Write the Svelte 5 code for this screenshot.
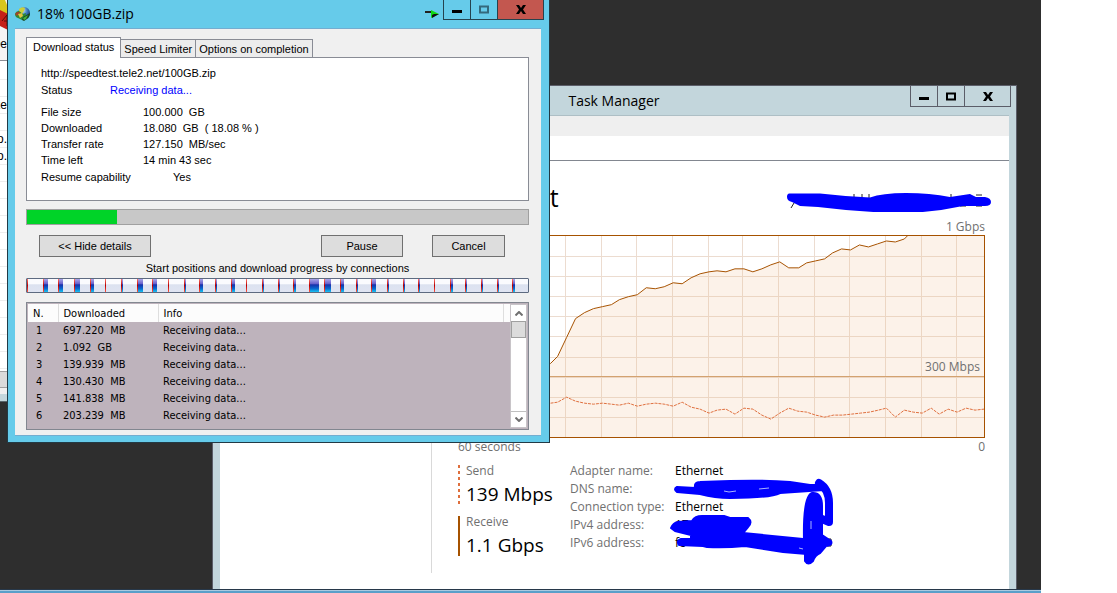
<script>
    let activeTab = $state('Download status');
    let showDetails = $state(true);
    let paused = $state(false);

    const tabs = ['Download status', 'Speed Limiter', 'Options on completion'];

    const info = [
        { label: 'File size', value: '100.000  GB' },
        { label: 'Downloaded', value: '18.080  GB  ( 18.08 % )' },
        { label: 'Transfer rate', value: '127.150  MB/sec' },
        { label: 'Time left', value: '14 min 43 sec' },
    ];

    // Downloaded part of each connection, in pixels
    const connections = [0, 4, 4, 5, 3, 0, 1, 5, 4, 0, 1, 3, 1, 3, 0, 1, 1, 2, 9, 6, 3, 1, 4, 1, 1, 1, 0, 2, 1, 1, 1, 2];

    const parts = [
        { n: '1', size: '697.220  MB' },
        { n: '2', size: '1.092  GB' },
        { n: '3', size: '139.939  MB' },
        { n: '4', size: '130.430  MB' },
        { n: '5', size: '141.838  MB' },
        { n: '6', size: '203.239  MB' },
        { n: '', size: '' },
    ];

    const files = ['', '', 'xe', '', 'o.', 'o.', '', '', '', '', '', '', '', '', '', '', '', ''];

    // Graph grid, in viewBox units
    const gridX = [36, 72, 107, 143, 178, 214, 250, 285, 321, 357, 392, 428, 464, 499];
    const gridY = [21, 41, 61, 81, 101, 122, 142, 162, 182];

    const receive =
        '0,150 60,140 92,128 99,121 108,102 117,83 126,77 135,73 144,71 153,69 161,64 170,61 179,59 188,52 197,53 206,51 215,47 224,48 233,42 242,38 251,36 259,35 268,36 277,33 286,33 295,36 304,33 313,29 322,26 331,32 341,32 349,27 358,25 367,23 375,17 384,13 393,14 402,9 411,11 420,8 429,5 438,6 447,3 450,0';
    const send =
        '0,172 60,170 92,168 99,167 108,162 117,166 126,168 135,169 144,168 153,169 161,170 170,168 179,171 188,169 197,168 206,169 215,171 224,167 233,172 242,174 251,178 259,175 268,174 277,179 286,173 295,174 304,180 313,184 322,178 331,173 340,176 349,177 358,180 367,182 376,180 385,180 394,179 403,178 412,177 421,175 429,173 438,182 447,175 456,177 465,178 474,173 482,179 491,174 500,177 509,173 518,175 527,174';
</script>

<div class="desktop">
    <!-- File list behind the download window -->
    <div class="explorer">
        <svg class="archive" viewBox="0 0 8 31" aria-hidden="true">
            <path d="M0 0h5l3 7v8H0z" fill="#d8c61c" />
            <path d="M0 10l8 4v16l-8-4z" fill="#c52018" />
            <path d="M2 21l5-6v11M4 21h4" stroke="#5b0d08" stroke-width="1" fill="none" />
        </svg>
        <div class="explorer-label">De</div>
        <div class="files">
            {#each files as file}
                <div class="file">{file}</div>
            {/each}
        </div>
        <div class="explorer-scroll"></div>
        <div class="explorer-status"></div>
    </div>

    <!-- Task Manager -->
    <section class="window task-manager">
        <header class="tm-title">
            <h1>Task Manager</h1>
            <div class="caption-buttons tm-buttons">
                <button aria-label="Minimize"><svg viewBox="0 0 10 9"><path d="M0 5h10v3H0z" /></svg></button>
                <button aria-label="Maximize"><svg viewBox="0 0 10 9"><path d="M1 1.500h8v6H1z" fill="none" stroke="#000" stroke-width="2" /></svg></button>
                <button class="close" aria-label="Close"><svg viewBox="0 0 10 9"><path d="M0 0h3l2 3 2-3h3L7 4.500l3 4.500H7L5 6 3 9H0l3-4.500z" /></svg></button>
            </div>
        </header>
        <div class="tm-client">
            <div class="tm-menu"></div>
            <div class="tm-tabs"></div>
            <div class="tm-body">
                <div class="tm-sidebar"></div>
                <main class="tm-main">
                    <div class="tm-heading">
                        <h2>Ethernet</h2>
                        <svg class="adapter-mark" viewBox="0 0 206 22" role="img" aria-label="Adapter hidden">
                            <path d="M8 13l-3 5M68 4v4M76 4v4M83 4v4M165 4v4M174 16h6M190 5h6M190 16h6" stroke="#222" stroke-width="1" />
                            <path d="M4 3.500h30q26 3 50 4Q96 3 120 3t44 4l20-3 6 3h9q6 1 6 5t-6 4h-22q-32 7-65 7-40-1-80-6l-18-1q-4-2-8-4Q1 11 1 7t3-3.500z" fill="#00f" />
                        </svg>
                    </div>
                    <div class="scale top">1 Gbps</div>
                    <div class="graph">
                        <svg viewBox="0 0 527 202" preserveAspectRatio="none" role="img" aria-label="Throughput">
                            {#each gridX as x}
                                <path d="M{x} 0V202" class="grid" />
                            {/each}
                            {#each gridY as y}
                                <path d="M0 {y}H527" class="grid" />
                            {/each}
                            <polygon points="{receive} 527,0 527,202 0,202" class="area" />
                            <path d="M0 141H527" class="mark" />
                            <polyline points={receive} class="receive-line" />
                            <polyline points={send} class="send-line" />
                        </svg>
                        <span class="mark-label">300 Mbps</span>
                    </div>
                    <div class="scale bottom"><span>60 seconds</span><span>0</span></div>
                    <div class="stats">
                        <div class="rates">
                            <div class="rate send">
                                <div class="rate-label">Send</div>
                                <div class="rate-value">139 Mbps</div>
                            </div>
                            <div class="rate">
                                <div class="rate-label">Receive</div>
                                <div class="rate-value">1.1 Gbps</div>
                            </div>
                        </div>
                        <dl class="adapter">
                            <dt>Adapter name:</dt><dd>Ethernet</dd>
                            <dt>DNS name:</dt><dd></dd>
                            <dt>Connection type:</dt><dd>Ethernet</dd>
                            <dt>IPv4 address:</dt><dd>17</dd>
                            <dt>IPv6 address:</dt><dd>fe</dd>
                        </dl>
                        <svg class="scribble" viewBox="668 476 170 92" aria-hidden="true">
                            <path d="M827 540h4v7h-4" stroke="#111" fill="none" />
                            <g fill="#00f" stroke="#00f" stroke-width="2" stroke-linejoin="round">
                                <path d="M677 488l18 1q-1-6 5-6l30-1q35-1 60 1l20 3h14v5l-44 3q-10 5-50 5-15 0-30-4l-23-2q-4-3 0-5z" />
                                <path d="M671 529q2-5 7-6l14-1q3-5 10-5l22 0 6 2h18q5 4 0 9l-5 6 60 6h4v15l-24-2-38-6q-20 2-38 1l-4-1-24-1q-3-4 2-6l10 0v-4l-16-4z" />
                                <path d="M804 541q-1-44 8-47 10-1 10 13v29l9 6q2 4-5 5l-6 7q-5 2-7 8-5 5-8 0v-12z" />
                            </g>
                            <path d="M819 484q10 6 10 20v19l-7-3" fill="none" stroke="#00f" stroke-width="8" stroke-linecap="round" stroke-linejoin="round" />
                            <path d="M724 492l5 1 7-1M759 490l10-1M811 522v8M799 549l4 1" stroke="#aab4ff" fill="none" />
                        </svg>
                    </div>
                </main>
            </div>
        </div>
    </section>

    <!-- Download window -->
    <section class="window download">
        <header class="dl-title">
            <svg class="app-icon" viewBox="0 0 16 16" aria-hidden="true">
                <defs>
                    <radialGradient id="globe" cx="0.4" cy="0.3" r="0.7">
                        <stop offset="0" stop-color="#cfe3f5" />
                        <stop offset="0.5" stop-color="#3f7fc4" />
                        <stop offset="1" stop-color="#12336e" />
                    </radialGradient>
                </defs>
                <circle cx="9" cy="7" r="6" fill="url(#globe)" />
                <path d="M4 3q3-3 6-1l-1 3-2 3-3 0z" fill="#c9cf3a" />
                <path d="M0 8q1-3 4-3l4 3 3-1-1 5-3 2-4-2q-3-1-3-4z" fill="#2b8a35" />
                <path d="M0 8q2-3 5-2l-1 2-2 2z" fill="#a0452a" />
                <path d="M3 8l4-1 1 3-3 2z" fill="#e3c43e" />
                <path d="M7 14l1-3 7-4q0 4-3 6l-3 2z" fill="#174a22" />
                <path d="M8 12l5-3-2 4-2 1z" fill="#46b038" />
            </svg>
            <h1>18% 100GB.zip</h1>
            <svg class="pin" viewBox="0 0 14 9" aria-hidden="true">
                <path d="M0 1h7v2H0z" fill="#222" />
                <path d="M6 0l8 4-8 4z" fill="#12d812" />
                <path d="M7 8V5l2-1h5z" fill="#111" />
            </svg>
            <div class="caption-buttons dl-buttons">
                <button aria-label="Minimize"><svg viewBox="0 0 10 9"><path d="M0 5h10v3H0z" /></svg></button>
                <button aria-label="Maximize" disabled><svg viewBox="0 0 10 9"><path d="M1 1.500h8v6H1z" fill="none" stroke="#34697c" stroke-width="2" /></svg></button>
                <button class="close" aria-label="Close"><svg viewBox="0 0 10 9"><path d="M0 0h3l2 3 2-3h3L7 4.500l3 4.500H7L5 6 3 9H0l3-4.500z" /></svg></button>
            </div>
        </header>
        <div class="dl-client">
            <div class="tabs" role="tablist">
                {#each tabs as tab}
                    <button role="tab" class="tab" class:active={activeTab === tab} aria-selected={activeTab === tab} onclick={() => (activeTab = tab)}>{tab}</button>
                {/each}
            </div>
            <div class="panel" role="tabpanel">
                {#if activeTab === 'Download status'}
                    <div class="url">http://speedtest.tele2.net/100GB.zip</div>
                    <dl class="info status">
                        <dt>Status</dt>
                        <dd>{paused ? 'Paused' : 'Receiving data...'}</dd>
                    </dl>
                    <dl class="info">
                        {#each info as row}
                            <dt>{row.label}</dt>
                            <dd>{row.value}</dd>
                        {/each}
                    </dl>
                    <dl class="info resume">
                        <dt>Resume capability</dt>
                        <dd>Yes</dd>
                    </dl>
                {/if}
            </div>
            <progress value="18" max="100" aria-label="Download progress"></progress>
            <div class="actions">
                <button class="push details" onclick={() => (showDetails = !showDetails)}>{showDetails ? '<< Hide details' : 'Show details >>'}</button>
                <button class="push pause" onclick={() => (paused = !paused)}>{paused ? 'Resume' : 'Pause'}</button>
                <button class="push cancel">Cancel</button>
            </div>
            {#if showDetails}
                <div class="connections-label">Start positions and download progress by connections</div>
                <div class="connections">
                    {#each connections as width}
                        <div class="connection"><i class="start"></i><i class="done" style="width: {width}px"></i></div>
                    {/each}
                </div>
                <div class="list">
                    <div class="list-view">
                        <table>
                            <thead>
                                <tr><th class="col-n">N.</th><th class="col-size">Downloaded</th><th>Info</th><th class="col-rest"></th></tr>
                            </thead>
                            <tbody>
                                {#each parts as part}
                                    <tr><td class="number">{part.n}</td><td>{part.size}</td><td>Receiving data...</td><td></td></tr>
                                {/each}
                            </tbody>
                        </table>
                    </div>
                    <div class="scrollbar">
                        <button aria-label="Scroll up"><svg viewBox="0 0 8 5"><path d="M0.500 4.500L4 1l3.500 3.500" /></svg></button>
                        <div class="thumb"></div>
                        <button class="down" aria-label="Scroll down"><svg viewBox="0 0 8 5"><path d="M0.500 0.500L4 4 7.500 0.500" /></svg></button>
                    </div>
                </div>
            {/if}
        </div>
    </section>

    <div class="taskbar"></div>
</div>

<style>
    :global(body) {
        background: #fff;
        overflow: hidden;
    }

    .desktop {
        position: relative;
        height: 100vh;
        margin-right: 76px;
        background: #2e2e2e;
        overflow: hidden;
        font-family: "Open Sans", "Noto Sans", sans-serif;
        font-size: 12px;
        color: #000;
    }

    .desktop * {
        box-sizing: border-box;
    }

    h1, h2, dl, dd {
        margin: 0;
        font-weight: normal;
    }

    button {
        padding: 0;
        border: 0;
        background: none;
        font: inherit;
        color: inherit;
    }

    .window {
        position: absolute;
        display: flex;
        flex-direction: column;
    }

    .caption-buttons {
        display: flex;
        align-self: flex-start;
    }

    .caption-buttons button {
        display: flex;
        align-items: center;
        justify-content: center;
        width: 27px;
        border-right: 1px solid;
        border-color: inherit;
    }

    .caption-buttons .close {
        width: 46px;
    }

    .caption-buttons svg {
        width: 10px;
        height: 9px;
    }

    /* Explorer strip */
    .explorer {
        position: absolute;
        left: 0;
        top: 0;
        width: 7px;
        background: #f4f4f4;
        overflow: hidden;
        font-family: "Liberation Sans", sans-serif;
    }

    .archive {
        display: block;
        width: 8px;
        height: 31px;
    }

    .explorer-label {
        display: flex;
        justify-content: flex-end;
        height: 30px;
        line-height: 26px;
        border-bottom: 1px solid #8b8d94;
    }

    .files {
        height: 310px;
        padding-top: 2px;
        overflow: hidden;
        background: #fff;
    }

    .file {
        display: flex;
        justify-content: flex-end;
        height: 17px;
        line-height: 17px;
        border-bottom: 1px solid #ededed;
    }

    .explorer-scroll {
        height: 17px;
        background: #dadada;
        border: solid #a0a0a0;
        border-width: 1px 0;
    }

    .explorer-status {
        height: 14px;
        background: #c3d6dc;
        border-top: 6px solid #efefef;
        border-bottom: 1px solid #59666c;
    }

    /* Task manager */
    .task-manager {
        left: 212px;
        right: 24px;
        top: 85px;
        bottom: 4px;
        padding: 0 7px;
        background: #c3d6dc;
        border: 1px solid #5b5d68;
        border-bottom: 0;
    }

    .tm-title {
        display: flex;
        height: 30px;
        border-bottom: 1px solid #aebfc5;
    }

    .tm-title h1 {
        flex: 1;
        padding-left: 98px;
        text-align: center;
        font-size: 14px;
        line-height: 29px;
    }

    .tm-buttons {
        height: 21px;
        margin-right: -2px;
        border: solid #5b5d68;
        border-width: 0 0 1px 1px;
    }

    .tm-client {
        flex: 1;
        display: flex;
        flex-direction: column;
        background: #fff;
    }

    .tm-menu {
        height: 20px;
        background: #efefef;
    }

    .tm-tabs {
        height: 25px;
        border-bottom: 1px solid #828790;
    }

    .tm-body {
        flex: 1;
        display: flex;
        padding-bottom: 16px;
    }

    .tm-sidebar {
        width: 212px;
        border-right: 1px solid #d9d9d9;
    }

    .tm-main {
        flex: 1;
        padding: 16px 24px 0 26px;
    }

    .tm-heading {
        display: flex;
        justify-content: space-between;
        height: 42px;
    }

    .tm-heading h2 {
        font-size: 25px;
        line-height: 40px;
    }

    .adapter-mark {
        width: 206px;
        height: 22px;
        margin: 13px -7px 0 0;
    }

    .scale {
        color: #707070;
        line-height: 16px;
    }

    .scale.top {
        text-align: right;
    }

    .scale.bottom {
        display: flex;
        justify-content: space-between;
        padding-top: 1px;
    }

    .graph {
        position: relative;
        height: 203px;
        border: 1px solid #a65200;
    }

    .graph svg {
        display: block;
        width: 100%;
        height: 100%;
    }

    .grid {
        fill: none;
        stroke: #ecdcd0;
        stroke-width: 1;
        shape-rendering: crispEdges;
    }

    .area {
        fill: #f2bd8f;
        fill-opacity: 0.2;
    }

    .mark {
        stroke: #d3a26f;
        shape-rendering: crispEdges;
    }

    .receive-line {
        fill: none;
        stroke: #a65200;
    }

    .send-line {
        fill: none;
        stroke: #df6f3d;
        stroke-dasharray: 3 1;
    }

    .mark-label {
        position: absolute;
        right: 4px;
        top: 122px;
        line-height: 18px;
        color: #707070;
    }

    .stats {
        position: relative;
        display: flex;
        padding-top: 7px;
    }

    .rates {
        width: 112px;
    }

    .rate {
        height: 40px;
        margin: 3px 0 11px;
        padding-left: 8px;
        background: linear-gradient(#a65200, #a65200) 0 0 / 2px 100% no-repeat;
        white-space: nowrap;
    }

    .rate.send {
        background-image: repeating-linear-gradient(#df6f3d 0 3px, #fff 3px 6px);
    }

    .rate-label {
        line-height: 12px;
        color: #707070;
    }

    .rate-value {
        font-size: 19px;
        line-height: 34px;
    }

    .adapter {
        display: grid;
        grid-template-columns: 105px auto;
        grid-auto-rows: 18px;
        line-height: 18px;
        color: #707070;
    }

    .adapter dd {
        color: #000;
    }

    .scribble {
        position: absolute;
        left: 210px;
        top: 20px;
        width: 170px;
        height: 92px;
    }

    /* Download window */
    .download {
        left: 7px;
        top: 0;
        width: 543px;
        padding: 0 8px 6px 7px;
        background: #66cbea;
        border: 1px solid #223a45;
        border-top: 0;
        font-family: "Liberation Sans", Arial, sans-serif;
        font-size: 11px;
    }

    .dl-title {
        display: flex;
        height: 28px;
    }

    .dl-title h1 {
        flex: 1;
        padding-left: 6px;
        font-family: "Open Sans", "Noto Sans", sans-serif;
        font-size: 14px;
        line-height: 28px;
    }

    .app-icon {
        width: 16px;
        height: 16px;
        margin-top: 6px;
    }

    .pin {
        width: 14px;
        height: 9px;
        margin: 10px 4px 0 0;
    }

    .dl-buttons {
        height: 20px;
        margin-right: -3px;
        border: solid #25434f;
        border-width: 0 0 1px 1px;
    }

    .dl-buttons .close {
        background: #c3574f;
    }

    .dl-client {
        padding: 8px 12px 5px 11px;
        background: #f0f0f0;
        border: solid #74add0;
        border-width: 1px 0;
    }

    .tabs {
        display: flex;
        align-items: flex-end;
        height: 20px;
    }

    .tab {
        height: 18px;
        padding: 0 3px;
        border: solid #898c95;
        border-width: 1px 1px 0 0;
        background: #ececec;
    }

    .tab.active {
        position: relative;
        height: 21px;
        margin-bottom: -1px;
        padding: 0 6px 2px;
        border-left-width: 1px;
        background: #fff;
    }

    .panel {
        height: 144px;
        padding: 7px 14px;
        border: 1px solid #898c95;
        background: #fff;
        line-height: 16px;
    }

    .info {
        display: grid;
        grid-template-columns: 102px auto;
        white-space: pre;
    }

    .info.status {
        grid-template-columns: 69px auto;
        margin: 1px 0 6px;
    }

    .info.status dd {
        color: #00f;
    }

    .info.resume {
        grid-template-columns: 132px auto;
        margin-top: 1px;
    }

    progress {
        display: block;
        appearance: none;
        width: 100%;
        height: 16px;
        margin-top: 8px;
        border: 1px solid #a0a0a0;
        background: #c8c8c8;
    }

    progress::-webkit-progress-bar {
        background: #c8c8c8;
    }

    progress::-webkit-progress-value {
        background: #00d328;
    }

    .list {
        font-family: "DejaVu Sans Condensed", "DejaVu Sans", sans-serif;
    }

    .actions {
        display: flex;
        padding: 10px 24px 0 13px;
    }

    .push {
        height: 22px;
        border: 1px solid #707070;
        background: #ddd;
    }

    .details {
        width: 112px;
        margin-right: auto;
    }

    .pause {
        width: 82px;
        margin-right: 29px;
    }

    .cancel {
        width: 73px;
    }

    .connections-label {
        padding: 2px 0 1px;
        line-height: 18px;
        text-align: center;
    }

    .connections {
        display: flex;
        height: 15px;
        border: 1px solid #5d6a80;
        border-radius: 1px;
        background: linear-gradient(#fafbfe 0 35%, #dce2f0 45%, #dfe4f2);
    }

    .connection {
        flex: 1;
        display: flex;
    }

    .start {
        flex: none;
        width: 1px;
        background: linear-gradient(#ff7468, #b80000 50%, #ff5442);
    }

    .done {
        flex: none;
        background: linear-gradient(#a9a5e8, #6a62cc 35%, #1733ac 45%, #086bd0 75%, #1bc5f2);
    }

    .list {
        display: flex;
        height: 128px;
        margin-top: 9px;
        padding: 1px;
        border: 1px solid #828790;
        background: #beb3bc;
    }

    .list-view {
        flex: 1;
        overflow: hidden;
    }

    table {
        width: 100%;
        border-collapse: collapse;
        table-layout: fixed;
    }

    th, td {
        height: 17px;
        padding: 0 0 0 5px;
        font-weight: normal;
        line-height: 17px;
        text-align: left;
        white-space: pre;
    }

    th {
        height: 18px;
        border-right: 1px solid #dedede;
        background: #fcfcfc;
    }

    td.number {
        padding-left: 8px;
    }

    .col-n {
        width: 30px;
    }

    .col-size {
        width: 100px;
    }

    .col-rest {
        width: 7px;
        padding: 0;
        border-right: 0;
    }

    .scrollbar {
        display: flex;
        flex-direction: column;
        width: 17px;
        background: #fff;
        border: 1px solid #c8c4c8;
    }

    .scrollbar button {
        display: flex;
        align-items: center;
        justify-content: center;
        height: 16px;
    }

    .scrollbar svg {
        width: 8px;
        height: 5px;
        fill: none;
        stroke: #707070;
        stroke-width: 2;
    }

    .thumb {
        height: 17px;
        border: 1px solid #a0a0a0;
        background: #dcdcdc;
    }

    .scrollbar .down {
        margin-top: auto;
        border-top: 1px solid #c0c0c0;
    }

    .taskbar {
        position: absolute;
        left: 0;
        right: 0;
        bottom: 0;
        height: 4px;
        border-top: 1px solid #27384a;
        background: linear-gradient(#a9c9e0 0 1px, #5a9fc9 1px);
    }
</style>
